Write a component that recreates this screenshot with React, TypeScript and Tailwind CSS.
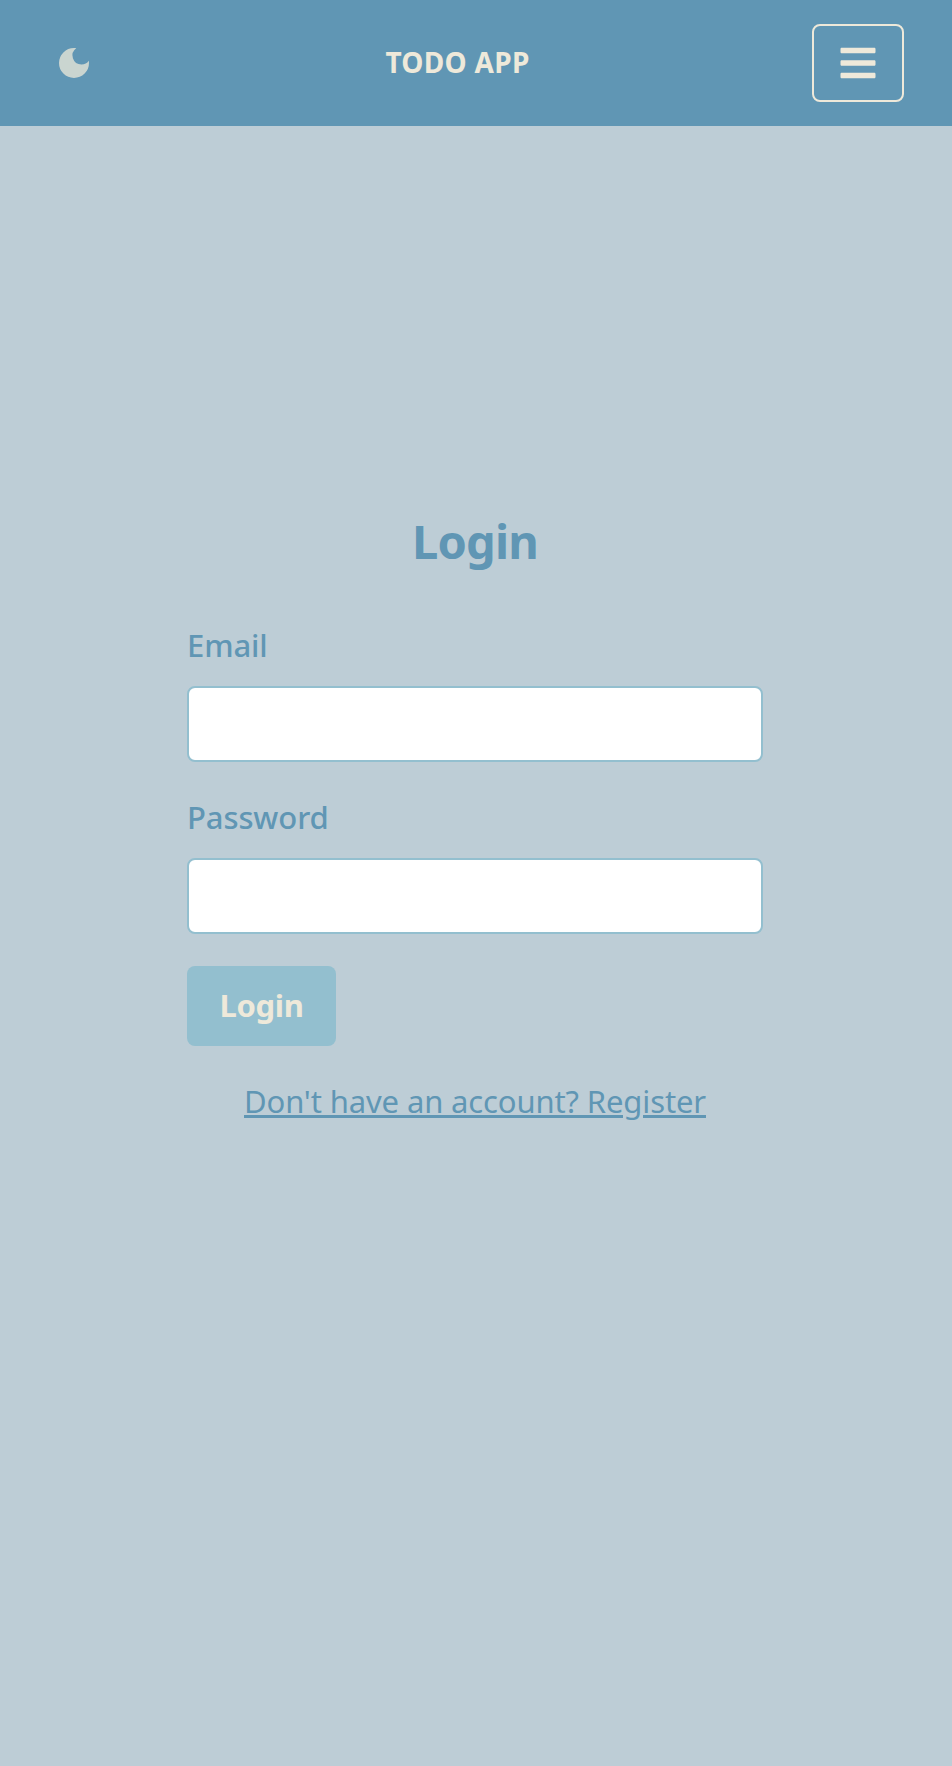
import { useState } from "react";
import { FaBars } from "react-icons/fa";
import { MdDarkMode } from "react-icons/md";

function Field({ label, type }: { label: string; type: string }) {
  const [value, setValue] = useState("");
  return (
    <label className="flex flex-col gap-[17px]">
      <span className="text-[31px] leading-[48px] font-medium tracking-[-0.1px] text-[#6096b4]">{label}</span>
      <input
        type={type}
        value={value}
        onChange={(e) => setValue(e.target.value)}
        className="h-[76px] w-full rounded-lg border-2 border-[#93bfcf] bg-white px-4 text-[31px] text-[#6096b4] outline-none"
      />
    </label>
  );
}

export default function App() {
  return (
    <div className="min-h-[1766px] bg-[#bdcdd6] font-['Noto_Sans','Open_Sans',sans-serif]">
      <header className="flex h-[126px] items-center justify-between bg-[#6096b4] pr-12 pl-[54px]">
        <button className="w-[92px] text-[#eee9da]/75" aria-label="Dark mode">
          <MdDarkMode size={40} />
        </button>
        <h1 className="mr-[43px] pb-[3px] text-[28px] leading-10 font-bold tracking-[0.3px] text-[#eee9da]">TODO APP</h1>
        <button
          className="flex h-[78px] w-[92px] items-center justify-center rounded-lg border-2 border-[#eee9da] text-[#eee9da]"
          aria-label="Menu"
        >
          <FaBars size={40} />
        </button>
      </header>
      <main className="mr-[189px] ml-[187px] pt-[388px]">
        <h2 className="text-center text-[47px] leading-[54px] font-bold tracking-[-0.8px] text-[#6096b4]">Login</h2>
        <form className="mt-[53px] flex flex-col gap-[31px]" onSubmit={(e) => e.preventDefault()}>
          <Field label="Email" type="email" />
          <Field label="Password" type="password" />
          <button className="mt-px flex h-20 w-[149px] items-center justify-center rounded-lg bg-[#93bfcf] pb-[2px] text-[31px] leading-[48px] font-bold tracking-[-0.3px] text-[#eee9da]">
            Login
          </button>
          <a
            href="#register"
            className="self-center text-[31px] leading-[48px] tracking-[-0.13px] text-[#6096b4] underline decoration-[3px] underline-offset-[2px]"
          >
            Don't have an account? Register
          </a>
        </form>
      </main>
    </div>
  );
}
